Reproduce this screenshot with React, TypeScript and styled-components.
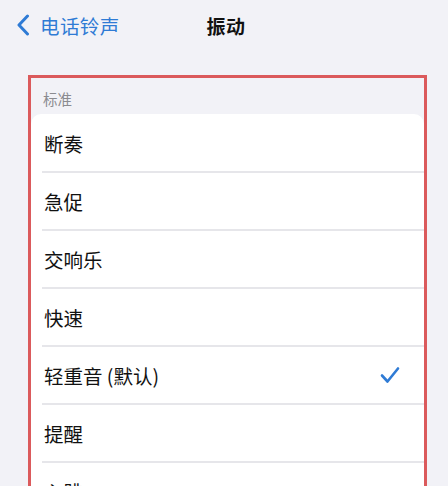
import React from "react";
import styled, { createGlobalStyle } from "styled-components";

const Global = createGlobalStyle`
  html, body { margin: 0; padding: 0; background: #f2f2f7; overflow: hidden; }
  body { font-family: "Noto Sans CJK SC", "Noto Sans", sans-serif; }
`;

const Screen = styled.div`
  width: 448px;
  height: 486px;
  background: #f2f2f7;
  overflow: hidden;
`;

const NavBar = styled.div`
  height: 50px;
  display: grid;
  grid-template-columns: 1fr auto 1fr;
  align-items: center;
  padding: 0 12px 0 16px;
`;

const Back = styled.div`
  display: flex;
  align-items: center;
  gap: 10px;
  color: #2f7bd5;
  font-size: 19.5px;
  letter-spacing: 0.4px;
`;

const Title = styled.div`
  font-size: 19px;
  font-weight: 700;
  color: #111;
  letter-spacing: 0.5px;
`;

const Annot = styled.div`
  margin: 25px 21px 0 28px;
  border: 3px solid #db5a5c;
  border-bottom: none;
  display: flex;
  flex-direction: column;
`;

const SectionHeader = styled.div`
  flex-shrink: 0;
  height: 36px;
  display: flex;
  align-items: center;
  padding: 4px 0 0 12px;
  box-sizing: border-box;
  font-size: 14.5px;
  color: #8b8b90;
`;

const Card = styled.div`
  background: #fff;
  border-radius: 10px 10px 0 0;
`;

const Row = styled.div`
  height: 58px;
  display: flex;
  align-items: center;
  justify-content: space-between;
  padding: 0 24px 0 13px;
  box-sizing: border-box;
  position: relative;
  font-size: 19.5px;
  color: #111;
  & + &::before {
    content: "";
    position: absolute;
    left: 11px;
    right: 0;
    top: -1px;
    height: 1.5px;
    background: #e6e6ea;
  }
`;

const items = ["断奏", "急促", "交响乐", "快速", "轻重音 (默认)", "提醒", "心跳"];

export default function App() {
  return (
    <Screen>
      <Global />
      <NavBar>
        <Back>
          <svg width="14" height="22" viewBox="0 0 14 22">
            <path d="M11.5 2 L3 11 L11.5 20" fill="none" stroke="#2f7bd5" strokeWidth="3" strokeLinecap="round" strokeLinejoin="round" />
          </svg>
          <span>电话铃声</span>
        </Back>
        <Title>振动</Title>
        <div />
      </NavBar>
      <Annot>
        <SectionHeader>标准</SectionHeader>
        <Card>
          {items.map((t) => (
            <Row key={t}>
              <span>{t}</span>
              {t.startsWith("轻重音") && (
                <svg width="20" height="18" viewBox="0 0 20 18">
                  <path d="M2 9.5 L7.5 15.5 L18 2.5" fill="none" stroke="#2f7bd5" strokeWidth="2.6" strokeLinecap="round" strokeLinejoin="round" />
                </svg>
              )}
            </Row>
          ))}
        </Card>
      </Annot>
    </Screen>
  );
}
